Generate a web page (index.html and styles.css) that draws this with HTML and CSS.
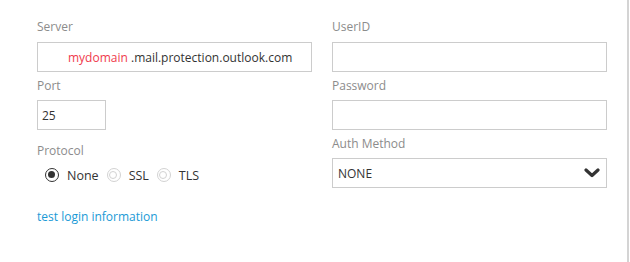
FILE: index.html
```html
<!DOCTYPE html>
<html>
<head>
<meta charset="utf-8">
<link rel="stylesheet" href="styles.css">
</head>
<body>
<div class="panel">
  <div class="col">
    <div class="field">
      <div class="label">Server</div>
      <div class="input server"><span class="domain">mydomain</span>&nbsp;.mail.protection.outlook.com</div>
    </div>
    <div class="field">
      <div class="label">Port</div>
      <div class="input port">25</div>
    </div>
    <div class="field proto">
      <div class="label">Protocol</div>
      <div class="radios">
        <span class="radio on"></span><span class="rtext">None</span>
        <span class="radio off"></span><span class="rtext">SSL</span>
        <span class="radio off"></span><span class="rtext">TLS</span>
      </div>
    </div>
    <a class="link" href="#">test login information</a>
  </div>
  <div class="col">
    <div class="field">
      <div class="label">UserID</div>
      <div class="input"></div>
    </div>
    <div class="field">
      <div class="label">Password</div>
      <div class="input"></div>
    </div>
    <div class="field">
      <div class="label">Auth Method</div>
      <div class="input select">
        <span>NONE</span>
        <svg class="chev" width="16" height="10" viewBox="0 0 16 10"><polyline points="2,2 8,7.5 14,2" fill="none" stroke="#333" stroke-width="3.2" stroke-linecap="round" stroke-linejoin="round"/></svg>
      </div>
    </div>
  </div>
</div>
</body>
</html>
```

FILE: styles.css
```css
html, body {
  margin: 0;
  padding: 0;
  background: #fff;
}
body {
  font-family: "Open Sans", "Noto Sans", sans-serif;
  font-size: 12px;
  color: #333;
  width: 630px;
  height: 262px;
  overflow: hidden;
}
.panel {
  display: flex;
  gap: 20px;
  width: 629px;
  height: 262px;
  box-sizing: border-box;
  padding: 13px 20px 0 37px;
  border-right: 2px solid #d4d4d4;
}
.col {
  width: 275px;
  display: flex;
  flex-direction: column;
}
.field {
  display: flex;
  flex-direction: column;
}
.label {
  color: #8c8c8c;
  line-height: 20px;
  margin-top: 4px;
  margin-bottom: 4px;
}
.field:first-child .label {
  margin-bottom: 5px;
}
.input {
  height: 30px;
  box-sizing: border-box;
  border: 1px solid #ccc;
  display: flex;
  align-items: center;
  padding: 0 6px;
  color: #333;
}
.server {
  padding-left: 30px;
}
.domain {
  color: #f03a4c;
}
.port {
  width: 69px;
  padding-left: 4px;
}
.proto .label {
  margin-top: 11px;
  margin-bottom: 2px;
}
.radios {
  display: flex;
  align-items: center;
  height: 24px;
  padding-left: 8px;
}
.radio {
  width: 14px;
  height: 14px;
  box-sizing: border-box;
  border-radius: 50%;
  position: relative;
  margin-right: 8px;
}
.radio.on {
  border: 1.5px solid #333;
}
.radio.on::after {
  content: "";
  position: absolute;
  left: 2px;
  top: 2px;
  width: 7px;
  height: 7px;
  border-radius: 50%;
  background: #333;
}
.radio.off {
  border: 1.5px solid #d2d2d2;
}
.radio.off::after {
  content: "";
  position: absolute;
  left: 1.5px;
  top: 1.5px;
  width: 8px;
  height: 8px;
  box-sizing: border-box;
  border-radius: 50%;
  border: 1.5px solid #d2d2d2;
}
.rtext {
  margin-right: 8px;
  font-size: 12.5px;
}
.link {
  color: #1a9ad6;
  text-decoration: none;
  margin-top: 20px;
  line-height: 20px;
}
.select {
  justify-content: space-between;
  padding-left: 5px;
  padding-right: 6px;
}
.chev {
  display: block;
}
```
